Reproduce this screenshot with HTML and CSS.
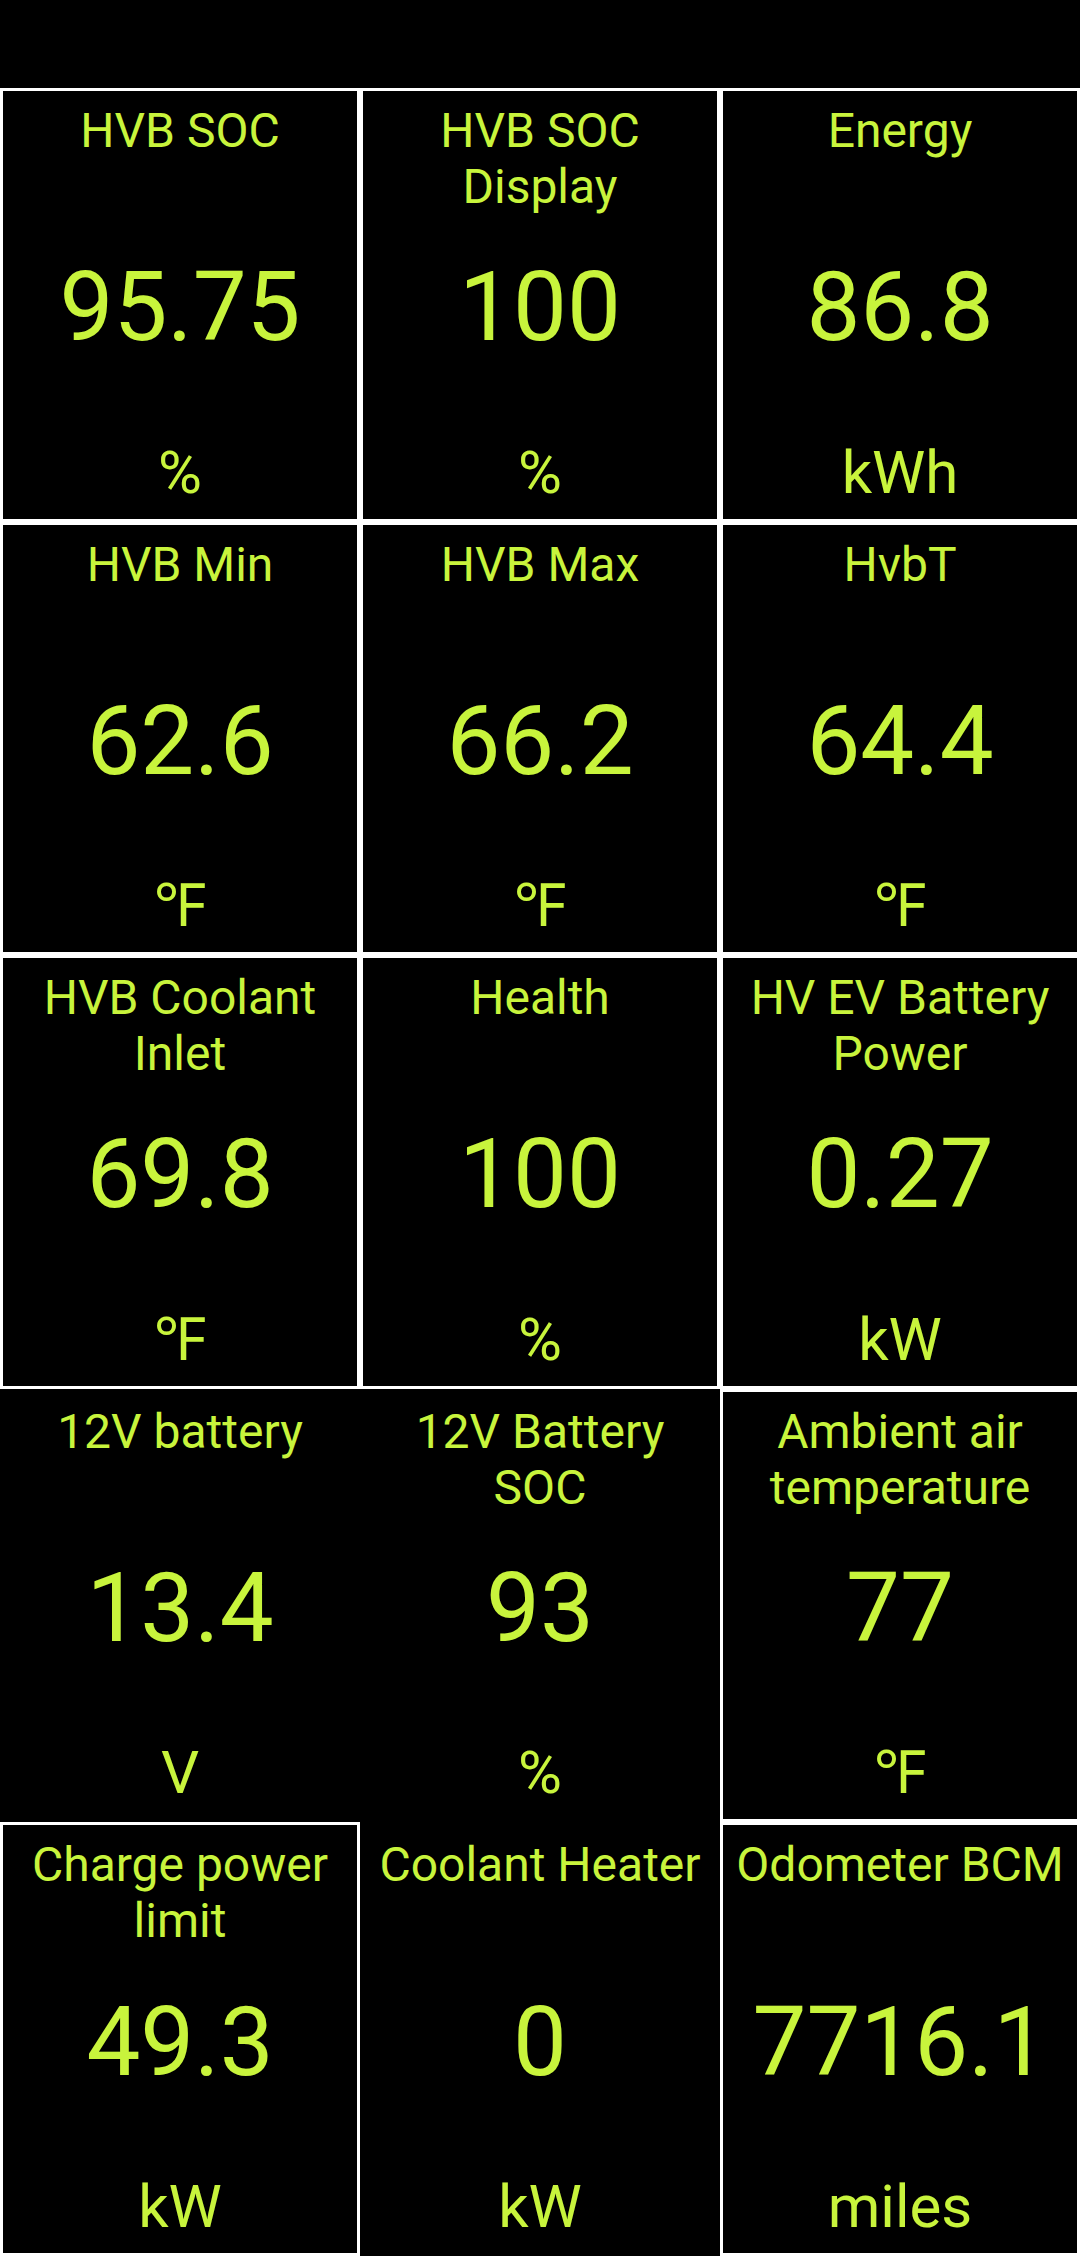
FILE: index.html
```html
<!DOCTYPE html>
<html lang="en">
<head>
<meta charset="utf-8">
<title>Dashboard</title>
<link rel="stylesheet" href="styles.css">
</head>
<body>
<div class="topbar"></div>
<main class="board">
  <section class="cell">
    <div class="title">HVB SOC</div>
    <div class="value">95.75</div>
    <div class="unit">%</div>
  </section>
  <section class="cell">
    <div class="title">HVB SOC<br>Display</div>
    <div class="value">100</div>
    <div class="unit">%</div>
  </section>
  <section class="cell">
    <div class="title">Energy</div>
    <div class="value">86.8</div>
    <div class="unit">kWh</div>
  </section>

  <section class="cell">
    <div class="title">HVB Min</div>
    <div class="value">62.6</div>
    <div class="unit">℉</div>
  </section>
  <section class="cell">
    <div class="title">HVB Max</div>
    <div class="value">66.2</div>
    <div class="unit">℉</div>
  </section>
  <section class="cell">
    <div class="title">HvbT</div>
    <div class="value">64.4</div>
    <div class="unit">℉</div>
  </section>

  <section class="cell">
    <div class="title">HVB Coolant<br>Inlet</div>
    <div class="value">69.8</div>
    <div class="unit">℉</div>
  </section>
  <section class="cell">
    <div class="title">Health</div>
    <div class="value">100</div>
    <div class="unit">%</div>
  </section>
  <section class="cell">
    <div class="title">HV EV Battery<br>Power</div>
    <div class="value">0.27</div>
    <div class="unit">kW</div>
  </section>

  <section class="cell plain">
    <div class="title">12V battery</div>
    <div class="value">13.4</div>
    <div class="unit">V</div>
  </section>
  <section class="cell plain">
    <div class="title">12V Battery<br>SOC</div>
    <div class="value">93</div>
    <div class="unit">%</div>
  </section>
  <section class="cell">
    <div class="title">Ambient air<br>temperature</div>
    <div class="value">77</div>
    <div class="unit">℉</div>
  </section>

  <section class="cell">
    <div class="title">Charge power<br>limit</div>
    <div class="value">49.3</div>
    <div class="unit">kW</div>
  </section>
  <section class="cell plain">
    <div class="title">Coolant Heater</div>
    <div class="value">0</div>
    <div class="unit">kW</div>
  </section>
  <section class="cell">
    <div class="title">Odometer BCM</div>
    <div class="value">7716.1</div>
    <div class="unit">miles</div>
  </section>
</main>
</body>
</html>
```

FILE: styles.css
```css
html, body {
  margin: 0;
  padding: 0;
  background: #000;
}

body {
  width: 1080px;
  height: 2256px;
  overflow: hidden;
  font-family: Roboto, "Noto Sans", "Liberation Sans", sans-serif;
  color: #c8f43c;
}

.topbar {
  height: 88px;
}

.board {
  display: grid;
  grid-template-columns: repeat(3, 360px);
  grid-template-rows: repeat(5, 1fr);
  height: 2168px;
}

.cell {
  box-sizing: border-box;
  border: 3px solid #ffffff;
  display: grid;
  grid-template-rows: 1fr auto 1fr;
  text-align: center;
  min-height: 0;
  overflow: hidden;
}

.cell.plain {
  border-color: transparent;
}

.title {
  align-self: start;
  padding: 12px 2px 0;
  font-size: 48px;
  line-height: 56px;
  white-space: nowrap;
}

.value {
  padding-top: 5px;
  font-size: 96px;
  line-height: 112px;
  white-space: nowrap;
}

.unit {
  align-self: end;
  padding-bottom: 11px;
  font-size: 60px;
  line-height: 70px;
  white-space: nowrap;
}
```
